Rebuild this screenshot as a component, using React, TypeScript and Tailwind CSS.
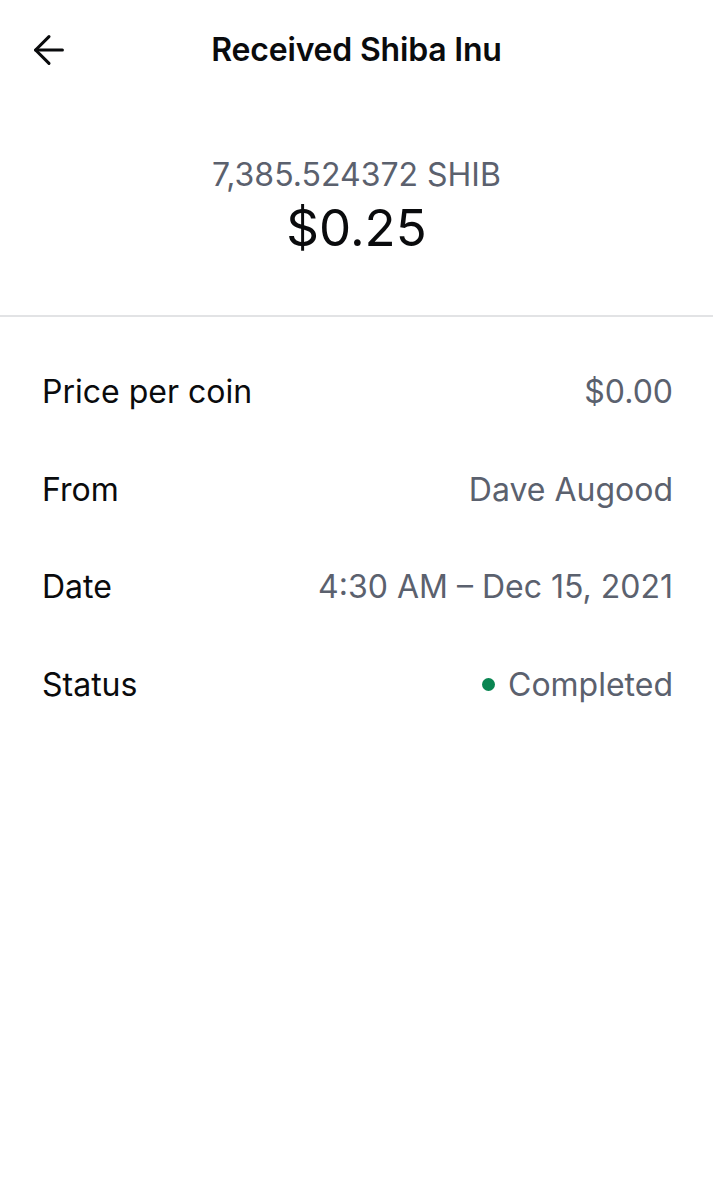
import { ArrowLeft } from "lucide-react";

const rows = [
  { label: "Price per coin", value: "$0.00" },
  { label: "From", value: "Dave Augood" },
  { label: "Date", value: "4:30 AM – Dec 15, 2021" },
];

export default function App() {
  return (
    <div className="min-h-[1200px] bg-white text-[#0a0b0d] font-['Inter',sans-serif]">
      <header className="relative flex h-[100px] items-center justify-center">
        <button className="absolute left-[26px] top-[27px] text-[#0a0b0d]">
          <ArrowLeft size={46} strokeWidth={1.6} />
        </button>
        <h1 className="text-[32px] font-semibold tracking-[-0.2px]">Received Shiba Inu</h1>
      </header>

      <div className="flex flex-col items-center pt-[57px] pb-[52px]">
        <div className="text-[32px] leading-[36px] text-[#5b616e]">7,385.524372 SHIB</div>
        <div className="text-[51px] leading-[70px] font-normal">$0.25</div>
      </div>

      <div className="h-[2px] bg-[#e2e3e5]" />

      <div className="flex flex-col pl-[42px] pr-[40px] pt-[50px]">
        {rows.map((r) => (
          <div key={r.label} className="flex h-[97.5px] items-start justify-between text-[32px] leading-[50px]">
            <span>{r.label}</span>
            <span className="text-[#5b616e]">{r.value}</span>
          </div>
        ))}
        <div className="flex h-[97.5px] items-start justify-between text-[32px] leading-[50px]">
          <span>Status</span>
          <span className="flex items-center gap-[13px] text-[#5b616e]">
            <span className="h-[13px] w-[13px] rounded-full bg-[#098551]" />
            Completed
          </span>
        </div>
      </div>
    </div>
  );
}
